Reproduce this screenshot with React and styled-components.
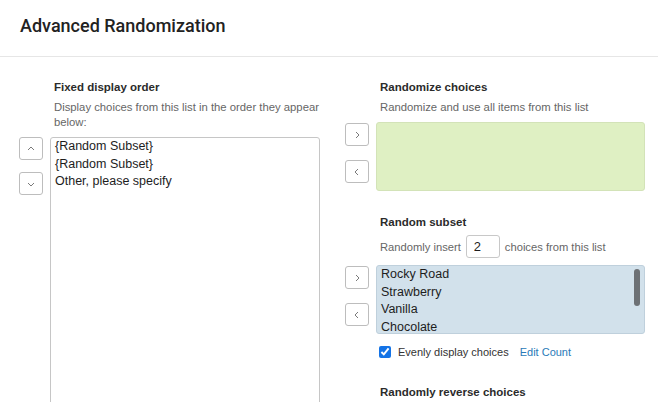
import React from 'react';
import styled, { createGlobalStyle } from 'styled-components';

const GlobalStyle = createGlobalStyle`
  html, body {
    margin: 0;
    padding: 0;
    overflow: hidden;
    background: #fff;
  }
  body {
    font-family: 'Liberation Sans', Arial, sans-serif;
    color: #1d1d1d;
  }
`;

const subsetItems = ['Rocky Road', 'Strawberry', 'Vanilla', 'Chocolate'];

function Chevron({ dir }) {
  const paths = {
    up: 'M2 6 L5 3 L8 6',
    down: 'M2 4 L5 7 L8 4',
    right: 'M4 2 L7 5 L4 8',
    left: 'M6 2 L3 5 L6 8',
  };
  return (
    <svg width="10" height="10" viewBox="0 0 10 10">
      <path d={paths[dir]} fill="none" stroke="#7a7a7a" strokeWidth="1" />
    </svg>
  );
}

export default function App() {
  return (
    <>
      <GlobalStyle />
      <Page>
        <Header>
          <h1>Advanced Randomization</h1>
        </Header>

        <Body>
          <Column>
            <Section>
              <Label>Fixed display order</Label>
              <Desc>Display choices from this list in the order they appear below:</Desc>
            </Section>
            <Mover $gap={12}>
              <Arrow>
                <Chevron dir="up" />
              </Arrow>
              <Arrow>
                <Chevron dir="down" />
              </Arrow>
            </Mover>
            <ListBox $height={300}>
              <Item>{'{Random Subset}'}</Item>
              <Item>{'{Random Subset}'}</Item>
              <Item>Other, please specify</Item>
            </ListBox>
          </Column>

          <Column>
            <Section>
              <Label>Randomize choices</Label>
              <Desc>Randomize and use all items from this list</Desc>
            </Section>
            <Mover $gap={14} $top={1}>
              <Arrow>
                <Chevron dir="right" />
              </Arrow>
              <Arrow>
                <Chevron dir="left" />
              </Arrow>
            </Mover>
            <ListBox $height={69} $bg="#dff0c3" $border="#d3e3b8" />

            <Section $top={23}>
              <Label>Random subset</Label>
              <InsertRow>
                Randomly insert
                <CountInput defaultValue="2" />
                choices from this list
              </InsertRow>
            </Section>
            <Mover $gap={14} $top={1}>
              <Arrow>
                <Chevron dir="right" />
              </Arrow>
              <Arrow>
                <Chevron dir="left" />
              </Arrow>
            </Mover>
            <ListBox $height={69} $bg="#d2e1eb" $border="#bfd0dc">
              {subsetItems.map((item) => (
                <Item key={item}>{item}</Item>
              ))}
              <Thumb />
            </ListBox>

            <CheckRow>
              <input type="checkbox" defaultChecked />
              <span>Evenly display choices</span>
              <EditLink>Edit Count</EditLink>
            </CheckRow>

            <Section $top={26}>
              <Label>Randomly reverse choices</Label>
            </Section>
          </Column>
        </Body>
      </Page>
    </>
  );
}

const Page = styled.div`
  width: 658px;
  height: 402px;
  overflow: hidden;
`;

const Header = styled.header`
  height: 57px;
  padding: 0 20px;
  border-bottom: 1px solid #e6e6e6;
  display: flex;
  align-items: center;
  box-sizing: border-box;
  h1 {
    margin: 0 0 6px;
    font-family: Roboto, 'Liberation Sans', sans-serif;
    font-size: 18px;
    font-weight: 500;
    color: #222;
  }
`;

const Body = styled.div`
  display: grid;
  grid-template-columns: 301px 300px;
  column-gap: 25px;
  padding: 22px 0 0 19px;
`;

const Column = styled.div`
  display: grid;
  grid-template-columns: 24px 1fr;
  column-gap: 7px;
  align-content: start;
`;

const Section = styled.div`
  grid-column: 2;
  padding-left: 4px;
  margin-top: ${(p) => p.$top || 0}px;
  margin-bottom: 7px;
`;

const Label = styled.div`
  font-size: 11.5px;
  font-weight: 700;
  line-height: 16px;
  color: #2b2b2b;
  margin-bottom: 5px;
`;

const Desc = styled.div`
  font-size: 11.3px;
  line-height: 15px;
  color: #666;
`;

const InsertRow = styled.div`
  display: flex;
  align-items: center;
  gap: 5px;
  font-size: 11.2px;
  color: #666;
  height: 23px;
`;

const CountInput = styled.input`
  width: 34px;
  height: 23px;
  box-sizing: border-box;
  border: 1px solid #c8c8c8;
  border-radius: 3px;
  padding: 0 0 0 7px;
  font-family: inherit;
  font-size: 13px;
  color: #1d1d1d;
  outline: none;
`;

const Mover = styled.div`
  grid-column: 1;
  display: flex;
  flex-direction: column;
  gap: ${(p) => p.$gap}px;
  padding-top: ${(p) => p.$top || 0}px;
`;

const Arrow = styled.button`
  width: 24px;
  height: 23px;
  box-sizing: border-box;
  padding: 0;
  border: 1px solid #bdbdbd;
  border-radius: 3px;
  background: #fff;
  display: flex;
  align-items: center;
  justify-content: center;
  cursor: pointer;
`;

const ListBox = styled.div`
  grid-column: 2;
  position: relative;
  height: ${(p) => p.$height}px;
  box-sizing: border-box;
  background: ${(p) => p.$bg || '#fff'};
  border: 1px solid ${(p) => p.$border || '#c6c6c6'};
  border-radius: 3px;
  padding: 0 4px;
  overflow: hidden;
`;

const Item = styled.div`
  font-size: 12.5px;
  line-height: 17.5px;
  color: #1d1d1d;
`;

const Thumb = styled.div`
  position: absolute;
  top: 3px;
  right: 4px;
  width: 6px;
  height: 37px;
  border-radius: 3px;
  background: #6d7175;
`;

const CheckRow = styled.label`
  grid-column: 2;
  display: flex;
  align-items: center;
  padding-left: 3px;
  margin-top: 12px;
  font-size: 11px;
  color: #333;
  input {
    width: 12px;
    height: 12px;
    margin: 0 7px 0 0;
    accent-color: #1473e6;
  }
`;

const EditLink = styled.a`
  margin-left: 11px;
  color: #2a7ab8;
  cursor: pointer;
`;
